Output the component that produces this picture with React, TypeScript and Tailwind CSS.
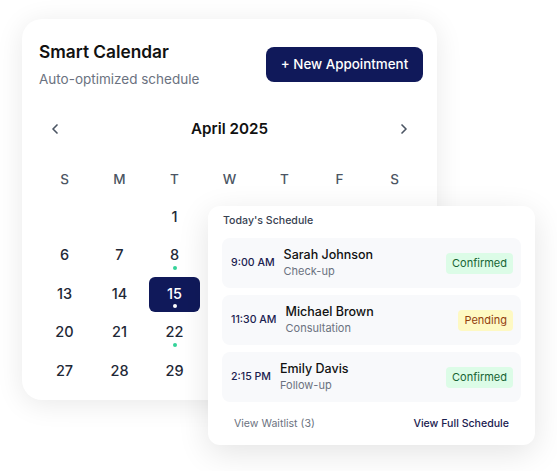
import React from "react";

const NAVY = "bg-[#10195a]";

function ChevronLeft() {
  return (
    <svg width="16" height="16" viewBox="0 0 24 24" fill="none" stroke="#4b5563" strokeWidth="2.5" strokeLinecap="round" strokeLinejoin="round">
      <path d="m15 18-6-6 6-6" />
    </svg>
  );
}
function ChevronRight() {
  return (
    <svg width="16" height="16" viewBox="0 0 24 24" fill="none" stroke="#4b5563" strokeWidth="2.5" strokeLinecap="round" strokeLinejoin="round">
      <path d="m9 18 6-6-6-6" />
    </svg>
  );
}

type Cell = { d?: number; dot?: boolean; sel?: boolean };

const cells: Cell[] = [
  {}, {}, { d: 1 }, {}, {}, {}, {},
  { d: 6 }, { d: 7 }, { d: 8, dot: true }, {}, {}, {}, {},
  { d: 13 }, { d: 14 }, { d: 15, sel: true, dot: true }, {}, {}, {}, {},
  { d: 20 }, { d: 21 }, { d: 22, dot: true }, {}, {}, {}, {},
  { d: 27 }, { d: 28 }, { d: 29 }, {}, {}, {}, {},
];

const appts = [
  { time: "9:00 AM", name: "Sarah Johnson", kind: "Check-up", status: "Confirmed" },
  { time: "11:30 AM", name: "Michael Brown", kind: "Consultation", status: "Pending" },
  { time: "2:15 PM", name: "Emily Davis", kind: "Follow-up", status: "Confirmed" },
];

export default function App() {
  return (
    <div
      className="relative w-[557px] h-[471px] bg-white overflow-hidden"
      style={{ fontFamily: "Inter, 'Noto Sans', sans-serif" }}
    >
      <div className="ml-[22px] mt-[19px] w-[415px] h-[381px] rounded-[20px] bg-white shadow-[0_4px_28px_rgba(0,0,0,0.09)] pl-[17px] pr-[14px] pt-[21px]">
        <div className="flex items-center justify-between">
          <div>
            <div className="text-[17.3px] leading-[24px] font-semibold text-[#111111]">Smart Calendar</div>
            <div className="mt-[4.5px] text-[13.5px] leading-[20px] text-[#6b7280]">Auto-optimized schedule</div>
          </div>
          <button className={`${NAVY} h-[35px] w-[157px] rounded-[8px] text-white text-[13.4px] font-medium`}>
            + New Appointment
          </button>
        </div>

        <div className="pr-[3px]">
          <div className="mt-[24px] flex items-center justify-between">
            <button className="p-2"><ChevronLeft /></button>
            <div className="text-[15.2px] leading-[24px] font-semibold text-[#111111]">April 2025</div>
            <button className="p-2"><ChevronRight /></button>
          </div>

          <div className="mt-[24px] grid grid-cols-7 gap-x-[4px]">
            {["S", "M", "T", "W", "T", "F", "S"].map((d, i) => (
              <div key={i} className="text-center text-[13.5px] leading-[20px] font-medium text-[#4b5563]">{d}</div>
            ))}
          </div>

          <div className="mt-[11px] grid grid-cols-7 gap-x-[4px] gap-y-[3.5px] auto-rows-[35px]">
            {cells.map((c, i) => (
              <div
                key={i}
                className={`flex flex-col items-center pt-[7px] rounded-[6px] ${c.sel ? NAVY : ""}`}
              >
                {c.d !== undefined && (
                  <>
                    <div className={`text-[14.5px] leading-[20px] font-medium ${c.sel ? "text-white" : "text-[#1f2937]"}`}>{c.d}</div>
                    {c.dot && (
                      <div className={`mt-[0.5px] w-[4px] h-[4px] rounded-full ${c.sel ? "bg-white" : "bg-[#34d399]"}`} />
                    )}
                  </>
                )}
              </div>
            ))}
          </div>
        </div>
      </div>

      <div className="absolute left-[208px] top-[206px] w-[327px] h-[239px] rounded-[12px] bg-white shadow-[0_8px_32px_rgba(0,0,0,0.11)] px-[14px] pt-[7px]">
        <div className="pl-[1px] text-[10.6px] leading-[16px] font-medium text-[#374151]">Today's Schedule</div>
        <div className="mt-[9px] flex flex-col gap-[7px]">
          {appts.map((a) => (
            <div key={a.name} className="h-[50px] rounded-[8px] bg-[#f8f9fb] flex items-center pl-[9px] pr-[8px]">
              <div className="text-[10.6px] font-medium text-[#1b2150]">{a.time}</div>
              <div className="ml-[9px] flex-1">
                <div className="text-[12.5px] leading-[16px] font-medium text-[#111111]">{a.name}</div>
                <div className="text-[11px] leading-[16px] text-[#6b7280]">{a.kind}</div>
              </div>
              <div
                className={`h-[21px] px-[6px] rounded-[4px] flex items-center text-[11px] ${
                  a.status === "Confirmed" ? "bg-[#dcfce7] text-[#166534]" : "bg-[#fef9c3] text-[#92400e]"
                }`}
              >
                {a.status}
              </div>
            </div>
          ))}
        </div>
        <div className="mt-[14px] px-[12px] flex justify-between text-[10.6px] leading-[16px]">
          <span className="text-[#6b7280]">View Waitlist (3)</span>
          <span className="font-medium text-[#1b2150]">View Full Schedule</span>
        </div>
      </div>
    </div>
  );
}
